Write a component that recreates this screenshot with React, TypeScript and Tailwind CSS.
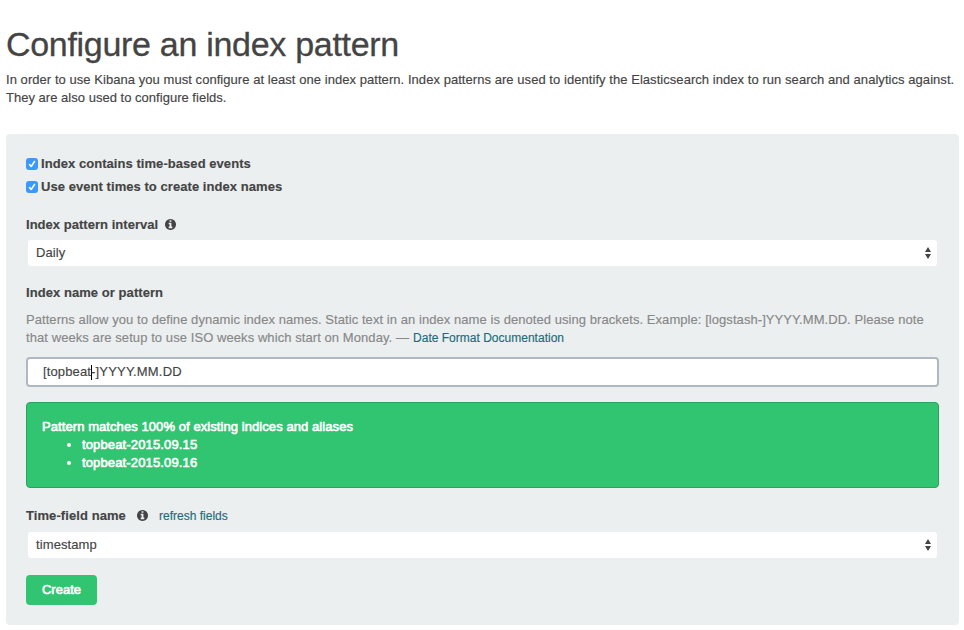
function InfoIcon({ className }: { className: string }) {
  return (
    <svg viewBox="0 0 1536 1536" className={`mb-px h-[11px] w-[11px] ${className}`} fill="currentColor">
      <path d="M1024 1248v-160q0-14-9-23t-23-9h-96V544q0-14-9-23t-23-9H544q-14 0-23 9t-9 23v160q0 14 9 23t23 9h96v320h-96q-14 0-23 9t-9 23v160q0 14 9 23t23 9h448q14 0 23-9t9-23zM896 352V192q0-14-9-23t-23-9H672q-14 0-23 9t-9 23v160q0 14 9 23t23 9h192q14 0 23-9t9-23zm640 416q0 209-103 385.500T1153.500 1433 768 1536t-385.500-103T103 1153.500 0 768t103-385.500T382.500 103 768 0t385.500 103T1433 382.500 1536 768z" />
    </svg>
  );
}

function Checkbox({ label }: { label: string }) {
  return (
    <label className="flex h-[23px] items-center">
      <span className="mt-px mr-[3px] flex h-3 w-3 items-center justify-center rounded-[3px] bg-[#3b99fc]">
        <svg viewBox="0 0 12 12" className="h-3 w-3" fill="none" stroke="white" strokeWidth="1.5" strokeLinecap="round" strokeLinejoin="round">
          <path d="M3.5 6.5 5.2 8.5 8.5 3.5" />
        </svg>
      </span>
      <span className="font-bold tracking-[0.055px]">{label}</span>
    </label>
  );
}

function Select({ value }: { value: string }) {
  return (
    <div className="mx-0.5 flex h-[26px] items-center justify-between rounded-[3px] bg-white pr-1.5 pl-2">
      <span className="tracking-[0.1px]">{value}</span>
      <svg viewBox="0 0 6 12" className="h-3 w-1.5" fill="#444">
        <path d="M3 0 6 5H0zM3 12 6 7H0z" />
      </svg>
    </div>
  );
}

export default function App() {
  return (
    <main className="h-[630px] w-[964px] overflow-hidden bg-white pl-1.5 font-['Liberation_Sans',Arial,sans-serif] text-[13px] leading-[18px] whitespace-nowrap text-[#444] [-webkit-text-stroke:0.15px]">
      <h1 className="pt-[24px] text-[34px] leading-[40px] tracking-[-0.3px] [-webkit-text-stroke:0.3px]">Configure an index pattern</h1>
      <div className="pt-[7px] tracking-[0.053px]">
        <div><span>In order to use Kibana you must configure at least one index pattern. Index patterns are used to identify the Elasticsearch index to run search and analytics against.</span></div>
        <div><span className="tracking-[0.02px]">They are also used to configure fields.</span></div>
      </div>
      <section className="mt-[27px] h-[491px] w-[953px] rounded bg-[#ebeff0] px-5 pt-[18px]">
        <Checkbox label="Index contains time-based events" />
        <Checkbox label="Use event times to create index names" />
        <div className="mt-[18px] flex h-[18px] items-center font-bold">
          <span className="tracking-[0.03px]">Index pattern interval</span>
          <InfoIcon className="ml-[7px]" />
        </div>
        <div className="mt-[6px]"><Select value="Daily" /></div>
        <div className="mt-[18px] font-bold tracking-[0.06px]"><span>Index name or pattern</span></div>
        <div className="mt-[9px] text-[#888]">
          <div><span className="tracking-[0.062px]">Patterns allow you to define dynamic index names. Static text in an index name is denoted using brackets. Example: [logstash-]YYYY.MM.DD. Please note</span></div>
          <div className="flex">
            <span className="tracking-[0.075px]">that weeks are setup to use ISO weeks which start on Monday. —</span>
            <a className="ml-1 text-[12px] tracking-[0.01px] text-[#1f6b7a]">Date Format Documentation</a>
          </div>
        </div>
        <div className="mt-[10px] flex h-[30px] items-center rounded border-2 border-[#b0b9c1] bg-white pl-[15px] tracking-[0.13px]">
          <span>[topbeat</span>
          <span className="-mr-px h-[15px] w-px bg-black" />
          <span className="tracking-[0.18px]">-]YYYY.MM.DD</span>
        </div>
        <div className="mt-[15px] h-[86px] rounded border border-[#28a55a] bg-[#31c471] px-[15px] pt-[15px] text-white [-webkit-text-stroke:0.6px]">
          <div><span className="tracking-[0.075px]">Pattern matches 100% of existing indices and aliases</span></div>
          {['topbeat-2015.09.15', 'topbeat-2015.09.16'].map((name) => (
            <div key={name} className="flex items-center pl-[25px]">
              <i className="mr-[11px] h-1 w-1 rounded-full bg-white" />
              <span className="tracking-[0.14px]">{name}</span>
            </div>
          ))}
        </div>
        <div className="mt-[19px] flex h-[18px] items-center">
          <span className="font-bold tracking-[0.08px]">Time-field name</span>
          <InfoIcon className="ml-[11px]" />
          <a className="ml-[11px] text-[12px] tracking-[0.01px] text-[#1f6b7a]">refresh fields</a>
        </div>
        <div className="mt-[7px]"><Select value="timestamp" /></div>
        <button className="mt-[17px] flex h-[30px] w-[71px] items-center justify-center rounded bg-[#31c471] text-white [-webkit-text-stroke:0.6px]">Create</button>
      </section>
    </main>
  );
}
